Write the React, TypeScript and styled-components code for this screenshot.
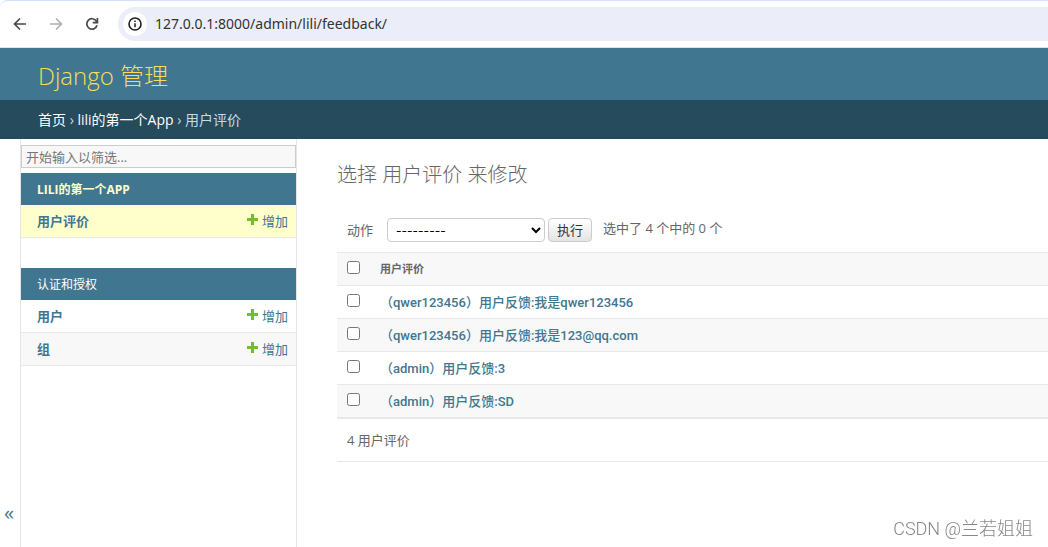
import React from "react";
import styled, { createGlobalStyle } from "styled-components";

const GlobalStyle = createGlobalStyle`
  *, *::before, *::after { box-sizing: border-box; }
  html, body, #root { height: 100%; }
  body {
    margin: 0;
    background: #fff;
    color: #666;
    font-family: "Open Sans", "Noto Sans CJK SC", sans-serif;
    font-size: 13px;
    line-height: 20px;
  }
  input, select, button { font-family: inherit; }
`;

const Page = styled.div`
  display: flex;
  flex-direction: column;
  min-height: 100%;
  overflow: hidden;
`;

const Toolbar = styled.nav`
  display: flex;
  align-items: center;
  height: 48px;
  padding-left: 10px;
  gap: 16px;
  background: #fff;
  border-top: 1px solid #d3e3fd;
  border-bottom: 1px solid #dce6e8;
  border-top-left-radius: 8px;
`;

const NavButton = styled.button`
  display: flex;
  align-items: center;
  justify-content: center;
  width: 20px;
  height: 20px;
  padding: 0;
  border: 0;
  background: none;
  color: #474747;
  &:disabled { color: #b0b0b0; }
`;

const AddressBar = styled.div`
  flex: 1;
  display: flex;
  align-items: center;
  gap: 8px;
  height: 34px;
  padding-left: 5px;
  background: #ebeef8;
  border-radius: 17px 0 0 17px;
`;

const SiteInfo = styled.button`
  display: flex;
  align-items: center;
  justify-content: center;
  width: 24px;
  height: 24px;
  padding: 0;
  border: 0;
  border-radius: 50%;
  background: #fff;
  color: #1f1f1f;
`;

const AddressInput = styled.input`
  flex: 1;
  min-width: 0;
  padding: 0;
  border: 0;
  outline: 0;
  background: none;
  color: #333;
  font-family: "Noto Sans", sans-serif;
  font-size: 14px;
  line-height: 20px;
`;

const Header = styled.header`
  display: flex;
  align-items: center;
  height: 52px;
  padding: 4px 38px 0;
  background: #417690;
`;

const SiteName = styled.a`
  color: #f5dd5d;
  font-size: 24px;
  font-weight: 300;
  line-height: 32px;
  text-decoration: none;
`;

const Breadcrumbs = styled.nav`
  height: 39px;
  padding: 10px 38px;
  background: #264b5d;
  color: #c4dce8;
  font-size: 14px;
  a { color: #fff; text-decoration: none; }
`;

const Body = styled.div`
  flex: 1;
  display: flex;
`;

const SidebarToggle = styled.button`
  display: flex;
  align-items: flex-end;
  justify-content: center;
  width: 21px;
  padding: 0 2px 22px 0;
  border: 0;
  border-right: 1px solid #e5e5e5;
  background: #fff;
  color: #417690;
  font-size: 20px;
  line-height: 24px;
`;

const Sidebar = styled.nav`
  width: 276px;
  flex: none;
  padding-top: 6px;
  border-right: 1px solid #e5e5e5;
`;

const Filter = styled.input`
  display: block;
  width: 100%;
  height: 23px;
  margin-bottom: 5px;
  padding: 0 4px;
  border: 1px solid #ccc;
  background: #f8f8f8;
  font-size: 13px;
  &::placeholder { color: #757575; opacity: 1; }
`;

const Module = styled.table`
  width: 100%;
  margin-bottom: 30px;
  border-collapse: separate;
  border-spacing: 0;
`;

const ModuleCaption = styled.caption<{ $current?: boolean }>`
  height: 32px;
  padding: 7px 16px 5px;
  background: #417690;
  color: ${(p) => (p.$current ? "#ffc" : "#fff")};
  font-size: 12px;
  font-weight: ${(p) => (p.$current ? 700 : 400)};
  text-align: left;
  a { color: inherit; text-decoration: none; }
`;

const ModelRow = styled.tr<{ $current?: boolean }>`
  height: 33px;
  background: ${(p) => (p.$current ? "#ffc" : "#fff")};
  &:nth-child(even) { background: #f8f8f8; }
  th, td { padding: 0 8px 0 16px; border-bottom: 1px solid #e8e8e8; }
  th { text-align: left; font-weight: 600; }
  td { text-align: right; }
  a { color: #417690; text-decoration: none; }
`;

const AddLink = styled.a`
  display: flex;
  align-items: center;
  justify-content: flex-end;
  gap: 4px;
  svg { margin-bottom: 3px; }
`;

const Content = styled.main`
  flex: 1;
  min-width: 0;
  padding: 23px 0 30px 40px;
`;

const Title = styled.h1`
  margin: 0 0 29px;
  color: #666;
  font-size: 20px;
  font-weight: 300;
  line-height: 26px;
`;

const Actions = styled.div`
  display: flex;
  align-items: center;
  height: 35px;
  padding: 1px 10px 10px;
  label { display: flex; align-items: center; gap: 14px; }
`;

const ActionSelect = styled.select`
  width: 158px;
  height: 24px;
  padding: 0 4px;
  border: 1px solid #ccc;
  border-radius: 4px;
  background: #fff;
  color: #000;
  font-family: Inter, "Noto Sans CJK SC", sans-serif;
  font-size: 12px;
`;

const RunButton = styled.button`
  width: 44px;
  height: 24px;
  margin-left: 3px;
  padding: 0;
  border: 1px solid #ccc;
  border-radius: 4px;
  background: linear-gradient(#fff, #e4e4e4);
  color: #333;
  font-size: 13px;
  line-height: 20px;
`;

const Counter = styled.span`
  margin-left: 11px;
  padding-bottom: 4px;
`;

const Results = styled.table`
  width: 100%;
  border-collapse: separate;
  border-spacing: 0;
  border-bottom: 1px solid #e8e8e8;
  tr { height: 33px; }
  th, td { padding: 0; border-bottom: 1px solid #e8e8e8; text-align: left; }
  thead tr { height: 34px; background: #f8f8f8; }
  thead th { border-top: 1px solid #e8e8e8; font-size: 11px; font-weight: 600; }
  tbody tr:nth-child(even) { background: #f8f8f8; }
  tbody th {
    padding-top: 2px;
    font-family: Roboto, "Noto Sans CJK SC", sans-serif;
    font-weight: 500;
  }
  a { color: #417690; text-decoration: none; }
`;

const CheckCell = styled.td`
  width: 43px;
  line-height: 0;
`;

const Check = styled.input`
  display: block;
  width: 13px;
  height: 13px;
  margin: 0 0 3px 10px;
`;

const Paginator = styled.p`
  margin: 0;
  padding: 11px 10px;
  border-bottom: 1px solid #e8e8e8;
`;

const Watermark = styled.div`
  position: fixed;
  right: 15px;
  bottom: 6px;
  color: #888;
  font-family: Roboto, "Noto Sans CJK SC", sans-serif;
  font-size: 18px;
  font-weight: 300;
  line-height: 24px;
`;

const BackIcon = () => (
  <svg width="14" height="14" viewBox="0 0 14 14" fill="none" stroke="currentColor" strokeWidth="1.6">
    <path d="M13 7H2M7 1.5 1.5 7 7 12.5" />
  </svg>
);

const ForwardIcon = () => (
  <svg width="14" height="14" viewBox="0 0 14 14" fill="none" stroke="currentColor" strokeWidth="1.6">
    <path d="M1 7h11M7 1.5 12.500 7 7 12.5" />
  </svg>
);

const ReloadIcon = () => (
  <svg width="14" height="14" viewBox="0 0 14 14" fill="none" stroke="currentColor" strokeWidth="1.7">
    <path d="M12 8.200A5.200 5.200 0 1 1 11.400 4.200L12 5" />
    <path d="M12.400 1v4.700H7.800" />
  </svg>
);

const InfoIcon = () => (
  <svg width="14" height="14" viewBox="0 0 14 14" fill="none" stroke="currentColor">
    <circle cx="7" cy="7" r="6" strokeWidth="1.6" />
    <path d="M7 6.200v4M7 3.500v1.600" strokeWidth="1.5" />
  </svg>
);

const PlusIcon = () => (
  <svg width="11" height="11" viewBox="0 0 11 11">
    <path d="M4 0h3v4h4v3H7v4H4V7H0V4h4z" fill="#70bf2b" />
  </svg>
);

const feedback = [
  "（qwer123456）用户反馈:我是qwer123456",
  "（qwer123456）用户反馈:我是123@qq.com",
  "（admin）用户反馈:3",
  "（admin）用户反馈:SD",
];

type Model = { name: string; current?: boolean };

const ModelList = ({ title, models, current }: { title: string; models: Model[]; current?: boolean }) => (
  <Module>
    <ModuleCaption $current={current}><a href="#app">{title}</a></ModuleCaption>
    <tbody>
      {models.map((m) => (
        <ModelRow key={m.name} $current={m.current}>
          <th scope="row"><a href="#model">{m.name}</a></th>
          <td><AddLink href="#add"><PlusIcon />增加</AddLink></td>
        </ModelRow>
      ))}
    </tbody>
  </Module>
);

export default function App() {
  return (
    <Page>
      <GlobalStyle />
      <Toolbar>
        <NavButton aria-label="Back"><BackIcon /></NavButton>
        <NavButton aria-label="Forward" disabled><ForwardIcon /></NavButton>
        <NavButton aria-label="Reload"><ReloadIcon /></NavButton>
        <AddressBar>
          <SiteInfo aria-label="Site information"><InfoIcon /></SiteInfo>
          <AddressInput aria-label="Address" defaultValue="127.0.0.1:8000/admin/lili/feedback/" />
        </AddressBar>
      </Toolbar>
      <Header><SiteName href="#home">Django 管理</SiteName></Header>
      <Breadcrumbs>
        <a href="#home">首页</a> › <a href="#app">lili的第一个App</a> › 用户评价
      </Breadcrumbs>
      <Body>
        <SidebarToggle aria-label="Toggle navigation">«</SidebarToggle>
        <Sidebar>
          <Filter type="search" aria-label="Filter" placeholder="开始输入以筛选..." />
          <ModelList title="LILI的第一个APP" current models={[{ name: "用户评价", current: true }]} />
          <ModelList title="认证和授权" models={[{ name: "用户" }, { name: "组" }]} />
        </Sidebar>
        <Content>
          <Title>选择 用户评价 来修改</Title>
          <Actions>
            <label>动作<ActionSelect><option>---------</option></ActionSelect></label>
            <RunButton>执行</RunButton>
            <Counter>选中了 4 个中的 0 个</Counter>
          </Actions>
          <Results>
            <thead>
              <tr>
                <CheckCell as="th"><Check type="checkbox" aria-label="Select all" /></CheckCell>
                <th scope="col">用户评价</th>
              </tr>
            </thead>
            <tbody>
              {feedback.map((f) => (
                <tr key={f}>
                  <CheckCell><Check type="checkbox" aria-label={f} /></CheckCell>
                  <th scope="row"><a href="#change">{f}</a></th>
                </tr>
              ))}
            </tbody>
          </Results>
          <Paginator>4 用户评价</Paginator>
        </Content>
      </Body>
      <Watermark>CSDN @兰若姐姐</Watermark>
    </Page>
  );
}
